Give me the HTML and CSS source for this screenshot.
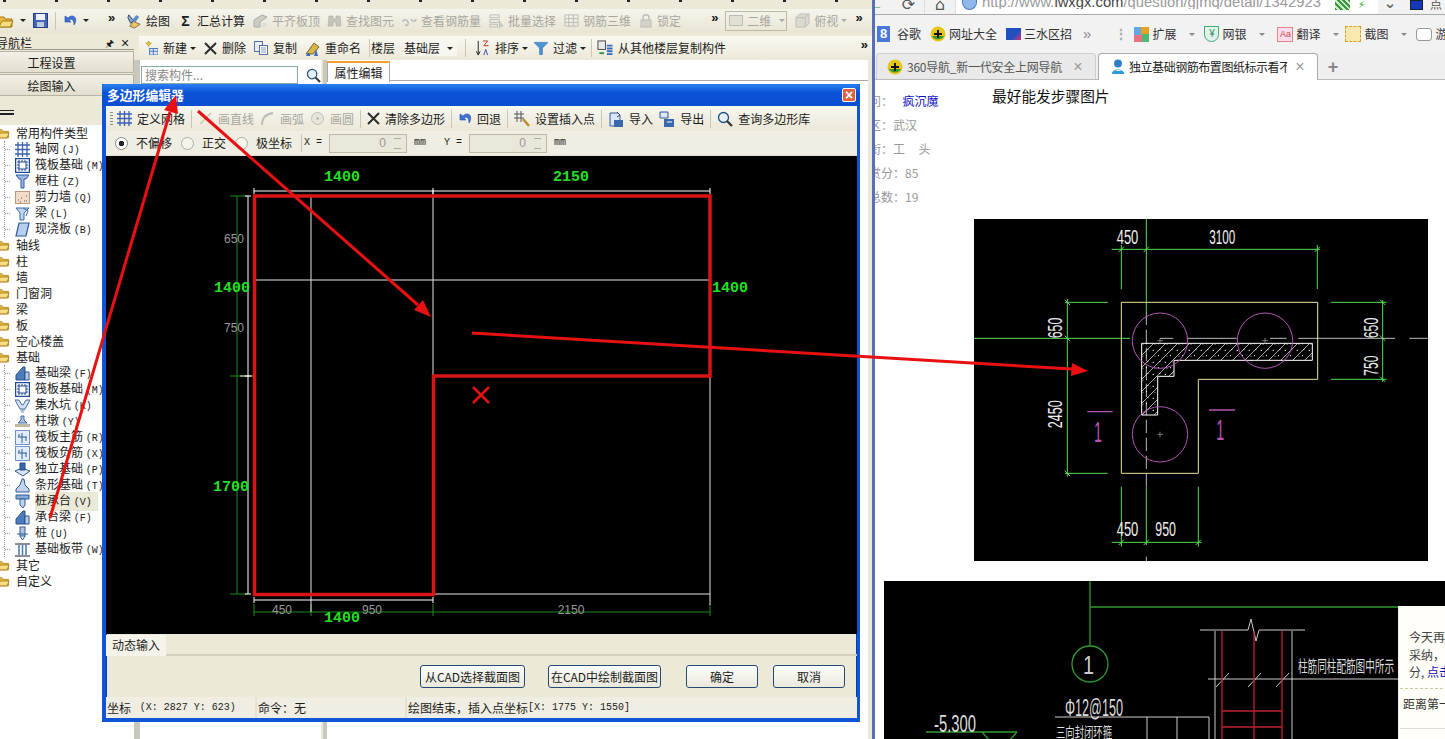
FILE: index.html
```html
<!DOCTYPE html>
<html lang="zh">
<head>
<meta charset="utf-8">
<title>多边形编辑器</title>
<link rel="stylesheet" href="styles.css">
</head>
<body>
<svg class="defs" width="0" height="0">
  <defs>
    <symbol id="i-folder" viewBox="0 0 16 14"><path d="M1 3h5l1 2h7v8H1z" fill="#e8b93c" stroke="#a57a18"/><path d="M1 13l3-6h11l-3 6z" fill="#f8dd80" stroke="#a57a18"/></symbol>
    <symbol id="i-save" viewBox="0 0 15 15"><rect x=".5" y=".5" width="14" height="14" fill="#4466b8" stroke="#223f88"/><rect x="3" y="1" width="9" height="6" fill="#eef"/><rect x="4" y="9" width="7" height="5" fill="#bcd"/></symbol>
    <symbol id="i-undo" viewBox="0 0 14 14"><path d="M2 2v6h6L6 6c3-2 5 0 5 5 3-4 2-9-2-9-2 0-3 1-4 2z" fill="#3f72d6" stroke="#224ea8" stroke-width=".6"/></symbol>
    <symbol id="i-draw" viewBox="0 0 17 17"><path d="M3 2l5 6-3 3-3-6z" fill="#8aa6d8" stroke="#345"/><path d="M8 9l7 3-6 4-5-2z" fill="#e8c860" stroke="#865"/><path d="M7 7l4-5 3 2-4 6z" fill="#5d8ad0"/></symbol>
    <symbol id="i-align" viewBox="0 0 15 15"><path d="M1 14V7l8-5 5 2-7 5v5z" fill="#cfcdc2" stroke="#aaa"/><path d="M9 14v-4h5v4z" fill="#ddd"/></symbol>
    <symbol id="i-bino" viewBox="0 0 15 15"><path d="M2 3h4v3h3V3h4l1 10H9V9H6v4H1z" fill="#c8c6bb" stroke="#aaa" stroke-width=".6"/></symbol>
    <symbol id="i-link" viewBox="0 0 15 15"><path d="M1 9c0-3 4-3 5 0s-1 4-3 3M14 6c0 3-4 3-5 0" fill="none" stroke="#bbb" stroke-width="1.6"/></symbol>
    <symbol id="i-batch" viewBox="0 0 16 16"><path d="M1 2h10v3H1zM1 7h10v3H1zM1 12h8v3H1z" fill="none" stroke="#bbb"/><path d="M11 9l4 5h-3l-1 2z" fill="#ccc" stroke="#aaa" stroke-width=".5"/></symbol>
    <symbol id="i-3d" viewBox="0 0 16 16"><path d="M1 2h14v12H1zM1 6h14M1 10h14M5 2v12M10 2v12" fill="none" stroke="#bbb"/></symbol>
    <symbol id="i-lock" viewBox="0 0 14 14"><path d="M4 6V3c0-3 6-3 6 0v3" fill="none" stroke="#bbb" stroke-width="1.4"/><rect x="2" y="6" width="10" height="7" fill="#d4d2c6" stroke="#bbb"/></symbol>
    <symbol id="i-cube" viewBox="0 0 16 16"><path d="M1 5l4-4h10v10l-4 4H1z" fill="#dddbce" stroke="#bbb"/><path d="M1 5h10v10M11 5l4-4" fill="none" stroke="#bbb"/></symbol>
    <symbol id="i-new" viewBox="0 0 15 15"><path d="M5 0l1 2 2 .5-2 1L5 6 4 3.500l-2-1 2-.5z" fill="#f0d020" stroke="#a08010" stroke-width=".6"/><rect x="6" y="8" width="9" height="7" fill="#dbe6f6" stroke="#4c74b8"/><path d="M6 11h9M10 8v7" stroke="#4c74b8"/></symbol>
    <symbol id="i-x" viewBox="0 0 13 13"><path d="M1 1l11 11M12 1L1 12" stroke="#2c2c2c" stroke-width="2"/></symbol>
    <symbol id="i-copy" viewBox="0 0 14 14"><rect x=".5" y=".5" width="8" height="10" fill="#e8edf7" stroke="#5570a8"/><rect x="5.500" y="4.500" width="8" height="9" fill="#fff" stroke="#5570a8"/><path d="M7 7h5M7 9h5M7 11h5" stroke="#5570a8" stroke-width=".7"/></symbol>
    <symbol id="i-rename" viewBox="0 0 15 15"><path d="M1 13L9 2l5 4-6 7z" fill="#d8b848" stroke="#7a6422"/><path d="M9 15l2-7 2 7zM1 15l2-3h2v3z" fill="#3f68c0"/></symbol>
    <symbol id="i-sort" viewBox="0 0 16 17"><path d="M4 1v14M2 12l2 4 2-4" stroke="#222" fill="none"/><path d="M9 1h5l-4 5h5" fill="none" stroke="#c03020"/><path d="M10 16l2-6 2 6" fill="none" stroke="#3050b0"/></symbol>
    <symbol id="i-filter" viewBox="0 0 15 14"><path d="M0 1h15L9 7v7H6V7z" fill="#4a94d8" stroke="#2a64a8" stroke-width=".6"/></symbol>
    <symbol id="i-floorcopy" viewBox="0 0 16 17"><rect x=".5" y="1" width="8" height="9" fill="#e9e9e9" stroke="#444"/><path d="M2 13h5v2H2z" fill="#2a9a40"/><path d="M10 6h6M10 9h6M10 12h6M10 15h6" stroke="#3a6cc0" stroke-width="2"/></symbol>
    <symbol id="i-grid" viewBox="0 0 15 15"><path d="M3 0v15M7.500 0v15M12 0v15M0 3h15M0 7.500h15M0 12h15" stroke="#3a62b0" stroke-width="1.300"/></symbol>
    <symbol id="i-raft" viewBox="0 0 15 15"><rect x=".5" y=".5" width="14" height="14" fill="none" stroke="#1e4a98" stroke-width="1.500"/><rect x="4" y="4" width="7" height="7" fill="none" stroke="#1e4a98"/><path d="M2 4h2M2 7h2M2 10h2M11 4h2M11 7h2M11 10h2M4 2v2M7 2v2M10 2v2M4 11v2M7 11v2M10 11v2" stroke="#1e4a98"/></symbol>
    <symbol id="i-col" viewBox="0 0 15 15"><path d="M1 1h13l-3 4H9v9H6V5H4z" fill="#9db8de" stroke="#2f5a9e"/></symbol>
    <symbol id="i-wall" viewBox="0 0 15 15"><rect x=".5" y="1.500" width="14" height="12" fill="#f2ddc8" stroke="#c09878"/><path d="M3 10h1M6 8h1M9 11h1M11 6h1M5 12h1M11 11h1" stroke="#556"/></symbol>
    <symbol id="i-beam" viewBox="0 0 15 15"><path d="M1 2h13L9 7v7H5V7z" fill="#c2d4ec" stroke="#3f6aa8"/><path d="M8 2l5 3-2 5" fill="none" stroke="#3f6aa8"/></symbol>
    <symbol id="i-slab" viewBox="0 0 15 15"><path d="M4 1h10l-3 13H1z" fill="#b6d0ef" stroke="#2f5a9e" stroke-width="1.200"/></symbol>
    <symbol id="i-fbeam" viewBox="0 0 15 15"><path d="M1 14V9l7-8h2v13z" fill="#4d7cbc" stroke="#2a4f88"/><path d="M10 14V6h4v8z" fill="#b8cfe9" stroke="#2a4f88"/></symbol>
    <symbol id="i-pit" viewBox="0 0 15 15"><path d="M0 2h4l3 5h1l3-5h4l-5 9H5z" fill="#d4e1f2" stroke="#4a6fa8"/><path d="M5 12h5M6 14h3" stroke="#68a"/></symbol>
    <symbol id="i-pier" viewBox="0 0 15 15"><path d="M6 2h3v4l3 3H3l3-3z" fill="#aec4e2" stroke="#3f6aa8"/><rect y="10" width="15" height="3" fill="#bdb9a4"/></symbol>
    <symbol id="i-rebar" viewBox="0 0 15 15"><rect x=".5" y=".5" width="14" height="14" fill="#e4eefa" stroke="#6f93c4"/><path d="M7 3v10M3 7h9M4 4v3M11 7v4" stroke="#2f5a9e"/></symbol>
    <symbol id="i-iso" viewBox="0 0 15 15"><path d="M0 9l7-3 8 3-7 5z" fill="#d7e3f3" stroke="#2f5a9e"/><path d="M5 1h5v7H5z" fill="#3a68ac" stroke="#204a88"/></symbol>
    <symbol id="i-strip" viewBox="0 0 15 15"><path d="M7 1h2l1 6 4 4v3H1v-3l4-4z" fill="#c2d4ec" stroke="#2f5a9e"/></symbol>
    <symbol id="i-cap" viewBox="0 0 15 15"><path d="M1 1h13v4H1z" fill="#8aaad6" stroke="#2f5a9e"/><path d="M5 5h5v6l-2 3-3-3z" fill="#c2d4ec" stroke="#2f5a9e"/></symbol>
    <symbol id="i-pile" viewBox="0 0 15 15"><rect x="5" y="1" width="5" height="9" fill="#aec4e2" stroke="#2f5a9e"/><path d="M2 8h11M5 10l2.500 4L10 10" fill="none" stroke="#2f5a9e"/></symbol>
    <symbol id="i-band" viewBox="0 0 15 15"><path d="M0 2h15M0 14h15" stroke="#667" stroke-width="1.500"/><path d="M4 3v10M7.500 3v10M11 3v10" stroke="#4a76b0" stroke-width="1.500"/></symbol>
    <symbol id="i-line" viewBox="0 0 15 15"><path d="M2 13L13 2" stroke="#c9c6b8" stroke-width="1.500"/></symbol>
    <symbol id="i-arc" viewBox="0 0 15 15"><path d="M2 14C2 7 6 3 13 2" fill="none" stroke="#bbb" stroke-width="1.800"/></symbol>
    <symbol id="i-circle" viewBox="0 0 15 15"><circle cx="7.500" cy="7.500" r="6" fill="#e8e6dc" stroke="#c2c0b4"/><circle cx="7.500" cy="7.500" r="1.200" fill="#aaa"/></symbol>
    <symbol id="i-insert" viewBox="0 0 16 16"><path d="M3 0v11M7 0v11M0 3h10M0 7h10" stroke="#555"/><path d="M9 8l6 7" stroke="#b89030" stroke-width="2.500"/></symbol>
    <symbol id="i-import" viewBox="0 0 16 16"><path d="M2 2h8l2 2v11H2z" fill="#dde6f5" stroke="#2f5a9e"/><rect x="6" y="9" width="9" height="7" fill="#3a68ac"/><path d="M9 1l3 3-3 2" fill="none" stroke="#345"/></symbol>
    <symbol id="i-export" viewBox="0 0 16 16"><path d="M1 1h8v6H1z" fill="#dde6f5" stroke="#2f5a9e"/><rect x="5" y="8" width="10" height="8" fill="#3a68ac"/><path d="M8 11h5" stroke="#fff"/></symbol>
    <symbol id="i-mag" viewBox="0 0 16 16"><circle cx="6.500" cy="6.500" r="5" fill="#e6f2fb" stroke="#1f4f80" stroke-width="1.300"/><path d="M10 10l5 5" stroke="#333" stroke-width="2.200"/></symbol>
    <symbol id="i-360" viewBox="0 0 16 16"><circle cx="8" cy="8" r="7.500" fill="#e6c619"/><path d="M2 10a7 7 0 0 0 12 0z" fill="#2f9a2c"/><path d="M8 4v8M4 8h8" stroke="#111" stroke-width="2"/></symbol>
    <symbol id="i-user" viewBox="0 0 16 18"><circle cx="8" cy="5" r="4.500" fill="#2f7fc8"/><path d="M1 17c0-7 14-7 14 0z" fill="#2f9ad8"/><path d="M6 13h5" stroke="#fff"/></symbol>
  </defs>
</svg>

<main class="desktop">
  <section class="app">
    <div class="menu-strip"></div>
    <div class="toolbar-top">
      <div class="quick">
        <svg class="ic16"><use href="#i-folder"/></svg><i class="drop"></i>
        <svg class="ic15 save"><use href="#i-save"/></svg><b class="sep"></b>
        <svg class="ic14"><use href="#i-undo"/></svg><i class="drop"></i>
        <span class="more">»</span>
      </div>
      <div class="tb tb-main">
        <span class="tool"><svg class="ic16"><use href="#i-draw"/></svg>绘图</span>
        <span class="tool"><span class="sigma">Σ</span>汇总计算</span>
        <span class="tool off"><svg class="ic15"><use href="#i-align"/></svg>平齐板顶</span>
        <span class="tool off tight"><svg class="ic15"><use href="#i-bino"/></svg>查找图元</span>
        <span class="tool off"><svg class="ic15"><use href="#i-link"/></svg>查看钢筋量</span>
        <span class="tool off"><svg class="ic15"><use href="#i-batch"/></svg>批量选择</span>
        <span class="tool off"><svg class="ic15"><use href="#i-3d"/></svg>钢筋三维</span>
        <span class="tool off"><svg class="ic14"><use href="#i-lock"/></svg>锁定</span>
        <span class="more more-a">»</span>
        <span class="combo off"><b class="combo-ic"></b>二维<i class="drop"></i></span>
        <span class="tool off"><svg class="ic15"><use href="#i-cube"/></svg>俯视<i class="drop"></i></span>
        <span class="more">»</span>
      </div>
    </div>
    <div class="work">
      <aside class="nav">
        <div class="nav-head"><span class="nav-title">导航栏</span><span class="pin">🖈</span><span class="close">×</span></div>
        <div class="nav-btn">工程设置</div>
        <div class="nav-btn">绘图输入</div>
        <div class="nav-tools"><b class="dash"></b></div>
        <div class="tree">
          <div class="node"><svg class="ic-f"><use href="#i-folder"/></svg>常用构件类型</div>
          <div class="kids">
            <div class="kid"><svg class="ic15"><use href="#i-grid"/></svg><span>轴网 <em>(J)</em></span></div>
            <div class="kid"><svg class="ic15"><use href="#i-raft"/></svg><span>筏板基础 <em>(M)</em></span></div>
            <div class="kid"><svg class="ic15"><use href="#i-col"/></svg><span>框柱 <em>(Z)</em></span></div>
            <div class="kid"><svg class="ic15"><use href="#i-wall"/></svg><span>剪力墙 <em>(Q)</em></span></div>
            <div class="kid"><svg class="ic15"><use href="#i-beam"/></svg><span>梁 <em>(L)</em></span></div>
            <div class="kid"><svg class="ic15"><use href="#i-slab"/></svg><span>现浇板 <em>(B)</em></span></div>
          </div>
          <div class="node"><svg class="ic-f"><use href="#i-folder"/></svg>轴线</div>
          <div class="node"><svg class="ic-f"><use href="#i-folder"/></svg>柱</div>
          <div class="node"><svg class="ic-f"><use href="#i-folder"/></svg>墙</div>
          <div class="node"><svg class="ic-f"><use href="#i-folder"/></svg>门窗洞</div>
          <div class="node"><svg class="ic-f"><use href="#i-folder"/></svg>梁</div>
          <div class="node"><svg class="ic-f"><use href="#i-folder"/></svg>板</div>
          <div class="node"><svg class="ic-f"><use href="#i-folder"/></svg>空心楼盖</div>
          <div class="node"><svg class="ic-f"><use href="#i-folder"/></svg>基础</div>
          <div class="kids">
            <div class="kid"><svg class="ic15"><use href="#i-fbeam"/></svg><span>基础梁 <em>(F)</em></span></div>
            <div class="kid"><svg class="ic15"><use href="#i-raft"/></svg><span>筏板基础 <em>(M)</em></span></div>
            <div class="kid"><svg class="ic15"><use href="#i-pit"/></svg><span>集水坑 <em>(K)</em></span></div>
            <div class="kid"><svg class="ic15"><use href="#i-pier"/></svg><span>柱墩 <em>(Y)</em></span></div>
            <div class="kid"><svg class="ic15"><use href="#i-rebar"/></svg><span>筏板主筋 <em>(R)</em></span></div>
            <div class="kid"><svg class="ic15"><use href="#i-rebar"/></svg><span>筏板负筋 <em>(X)</em></span></div>
            <div class="kid"><svg class="ic15"><use href="#i-iso"/></svg><span>独立基础 <em>(P)</em></span></div>
            <div class="kid"><svg class="ic15"><use href="#i-strip"/></svg><span>条形基础 <em>(T)</em></span></div>
            <div class="kid"><svg class="ic15"><use href="#i-cap"/></svg><span class="picked">桩承台 <em>(V)</em></span></div>
            <div class="kid"><svg class="ic15"><use href="#i-fbeam"/></svg><span>承台梁 <em>(F)</em></span></div>
            <div class="kid"><svg class="ic15"><use href="#i-pile"/></svg><span>桩 <em>(U)</em></span></div>
            <div class="kid"><svg class="ic15"><use href="#i-band"/></svg><span>基础板带 <em>(W)</em></span></div>
          </div>
          <div class="node"><svg class="ic-f"><use href="#i-folder"/></svg>其它</div>
          <div class="node"><svg class="ic-f"><use href="#i-folder"/></svg>自定义</div>
        </div>
      </aside>
      <div class="content">
        <div class="tb tb-second">
          <span class="tool"><svg class="ic14"><use href="#i-new"/></svg>新建<i class="drop"></i></span>
          <span class="tool"><svg class="ic13"><use href="#i-x"/></svg>删除</span>
          <span class="tool"><svg class="ic14"><use href="#i-copy"/></svg>复制</span>
          <span class="tool"><svg class="ic15"><use href="#i-rename"/></svg>重命名</span>
          <b class="sep"></b>
          <span class="floor-label">楼层</span>
          <span class="floor">基础层<i class="drop"></i></span>
          <b class="sep"></b>
          <span class="tool"><svg class="ic16"><use href="#i-sort"/></svg>排序<i class="drop"></i></span>
          <span class="tool tool-filter"><svg class="ic14"><use href="#i-filter"/></svg>过滤<i class="drop"></i></span>
          <b class="sep sep-last"></b>
          <span class="tool tool-last"><svg class="ic16"><use href="#i-floorcopy"/></svg>从其他楼层复制构件</span>
          <span class="more more-end">»</span>
        </div>
        <div class="panes">
          <div class="list-pane">
            <div class="search"><span class="search-box">搜索构件...</span><svg class="ic15"><use href="#i-mag"/></svg></div>
          </div>
          <div class="prop-pane">
            <div class="tabs"><span class="prop-tab">属性编辑</span></div>
          </div>
        </div>
      </div>
    </div>
  </section>

  <section class="browser">
    <div class="b-top">
      <span class="b-back">←</span>
      <span class="b-btn">⟳</span>
      <span class="b-btn">⌂</span>
      <div class="urlbar">
        <b class="globe"></b>
        <span class="url">http://www.<strong>lwxgx.com</strong>/question/gjmq/detail/1342923</span>
        <span class="qr"></span><span class="bolt">⚡</span>
      </div>
      <span class="chev">⌄</span>
      <b class="avatar"></b><span class="b-tail">点</span>
    </div>
    <div class="b-marks">
      <span class="mark"><b class="g8">8</b>谷歌</span>
      <span class="mark"><svg class="ic16"><use href="#i-360"/></svg>网址大全</span>
      <span class="mark"><b class="sanshui"></b>三水区招</span>
      <span class="mark-more">»</span>
      <span class="grip">⋮</span>
      <span class="mark"><b class="ext"></b>扩展<i class="drop"></i></span>
      <span class="mark"><b class="bank">¥</b>网银<i class="drop"></i></span>
      <span class="mark mark-aa"><b class="aa">Aa</b>翻译<i class="drop"></i></span>
      <span class="mark mark-cut"><b class="cut"></b>截图<i class="drop"></i></span>
      <span class="mark"><b class="game"></b>游</span>
    </div>
    <div class="b-tabs">
      <div class="b-tab"><svg class="ic16"><use href="#i-360"/></svg><span class="b-tab-title">360导航_新一代安全上网导航</span><span class="b-x">×</span></div>
      <div class="b-tab active"><svg class="ic16"><use href="#i-user"/></svg><span class="b-tab-title">独立基础钢筋布置图纸标示看不</span><span class="b-x">×</span></div>
      <span class="b-plus">+</span>
    </div>
    <div class="page">
      <div class="thread">
        <div class="side">
          <p>问：&nbsp; <a>疯沉魔</a></p>
          <p>区：武汉</p>
          <p>衔：工 &nbsp; &nbsp; 头</p>
          <p>赏分：85</p>
          <p>总数：19</p>
        </div>
        <p class="question">最好能发步骤图片</p>
      </div>
      <svg class="cad-one" viewBox="12 12 1362 1026" width="454" height="342">
        <defs>
          <pattern id="hatch" width="36" height="36" patternUnits="userSpaceOnUse">
            <path d="M0 36L36 0M-9 9L9 -9M27 45L45 27" stroke="#fff" stroke-width="2"/>
            <path d="M8 10h4M24 26h3M14 28h2M28 8h3" stroke="#fff" stroke-width="3"/>
          </pattern>
        </defs>
        <rect x="12" y="12" width="1362" height="1026" fill="#000"/>
        <g fill="none" stroke="#55dd55" stroke-width="3">
          <path d="M529 12V290M529 815V990M454 90V222M1042 90V222M425 103H1050M292 252V785M285 262H413M285 775H413M1238 255V500M1083 262H1250M1083 493H1250M425 982H695M454 815V995M685 815V995M12 370H480"/>
          <path d="M446 111l16-16M521 111l16-16M1034 111l16-16M284 254l16 16M284 767l16 16M1230 254l16 16M1230 485l16 16M284 362l16 16M1230 362l16 16M446 990l16-16M521 990l16-16M677 990l16-16"/>
        </g>
        <path d="M529 290V815M529 1025v13" fill="none" stroke="#bbb" stroke-width="3" stroke-dasharray="40 14"/>
        <path d="M570 370H610M650 370H800M900 370H950M985 370H1275M1318 370H1373" fill="none" stroke="#bbb" stroke-width="3"/>
        <path d="M454 262H1043V493H685V775H454Z" fill="none" stroke="#e8e29a" stroke-width="3"/>
        <path d="M515 385H1027V436H612V484H563V600H515Z" fill="url(#hatch)" stroke="#fff" stroke-width="3"/>
        <g fill="none" stroke="#b455b4" stroke-width="3">
          <circle cx="570" cy="377" r="83"/><circle cx="885" cy="377" r="83"/><circle cx="570" cy="658" r="83"/>
          <path d="M352 590H428M717 585H795" stroke-width="4"/>
        </g>
        <path d="M562 658h17M570 650v17M562 377h17M570 369v17M877 377h17M885 369v17" stroke="#aaa" stroke-width="2"/>
        <g class="cad-text">
          <text x="440" y="86" textLength="65" lengthAdjust="spacingAndGlyphs">450</text>
          <text x="718" y="86" textLength="78" lengthAdjust="spacingAndGlyphs">3100</text>
          <text x="440" y="964" textLength="65" lengthAdjust="spacingAndGlyphs">450</text>
          <text x="556" y="964" textLength="62" lengthAdjust="spacingAndGlyphs">950</text>
          <text transform="translate(277 370) rotate(-90)" textLength="62" lengthAdjust="spacingAndGlyphs">650</text>
          <text transform="translate(277 640) rotate(-90)" textLength="84" lengthAdjust="spacingAndGlyphs">2450</text>
          <text transform="translate(1223 370) rotate(-90)" textLength="62" lengthAdjust="spacingAndGlyphs">650</text>
          <text transform="translate(1223 482) rotate(-90)" textLength="60" lengthAdjust="spacingAndGlyphs">750</text>
        </g>
        <g class="cad-mark">
          <text x="372" y="680" textLength="24" lengthAdjust="spacingAndGlyphs">1</text>
          <text x="739" y="675" textLength="24" lengthAdjust="spacingAndGlyphs">1</text>
        </g>
      </svg>
      <svg class="cad-two" viewBox="884 581 561 158" width="561" height="158">
        <rect x="884" y="581" width="561" height="158" fill="#000"/>
        <g fill="none" stroke="#2f9a2f" stroke-width="1.300">
          <path d="M1090 581V646M1090 607H1398M926 732H1017M982 732l8 9M1017 732l-8 9"/>
          <circle cx="1090" cy="664" r="18"/>
        </g>
        <g fill="none" stroke="#ccc">
          <path d="M1200 630H1248L1251 619L1256 641L1259 630H1305M1215 631V739M1292 631V739M1208 679H1398M1055 717H1209M1147 717V739M1177 717V739M1209 717V739"/>
          <path d="M1216 687l13-14M1248 687l13-14M1276 687l13-14"/>
        </g>
        <path d="M1222 631V739M1254 631V739M1282 631V739M1222 711H1282M1222 727H1282" fill="none" stroke="#c02030" stroke-width="1.300"/>
        <g class="cad-small">
          <text x="1083" y="674" class="big" textLength="11" lengthAdjust="spacingAndGlyphs">1</text>
          <text x="1298" y="672" class="cjk" textLength="96" lengthAdjust="spacingAndGlyphs">柱筋同柱配筋图中所示</text>
          <text x="1065" y="716" class="mid" textLength="58" lengthAdjust="spacingAndGlyphs">Φ12@150</text>
          <text x="934" y="732" class="mid" textLength="42" lengthAdjust="spacingAndGlyphs">-5.300</text>
          <text x="1056" y="737" class="cjk cjk-s" textLength="56" lengthAdjust="spacingAndGlyphs">三向封闭环箍</text>
        </g>
      </svg>
      <aside class="popup">
        <p>今天再有</p>
        <p>采纳，当</p>
        <p>分, <a>点击</a></p>
        <div class="popup-rank">距离第一</div>
        <div class="popup-foot"><b></b></div>
      </aside>
    </div>
  </section>

  <section class="dialog">
    <header class="d-title"><span>多边形编辑器</span><span class="d-close">×</span></header>
    <div class="tb d-tools">
      <b class="grip-v"></b>
      <span class="tool"><svg class="ic15"><use href="#i-grid"/></svg>定义网格</span>
      <b class="sep"></b>
      <span class="tool off"><svg class="ic15"><use href="#i-line"/></svg>画直线</span>
      <span class="tool off"><svg class="ic15"><use href="#i-arc"/></svg>画弧</span>
      <span class="tool off"><svg class="ic15"><use href="#i-circle"/></svg>画圆</span>
      <b class="sep"></b>
      <span class="tool"><svg class="ic13"><use href="#i-x"/></svg>清除多边形</span>
      <b class="sep"></b>
      <span class="tool"><svg class="ic14"><use href="#i-undo"/></svg>回退</span>
      <b class="sep"></b>
      <span class="tool"><svg class="ic16"><use href="#i-insert"/></svg>设置插入点</span>
      <b class="sep"></b>
      <span class="tool"><svg class="ic16"><use href="#i-import"/></svg>导入</span>
      <span class="tool"><svg class="ic16"><use href="#i-export"/></svg>导出</span>
      <b class="sep"></b>
      <span class="tool"><svg class="ic16"><use href="#i-mag"/></svg>查询多边形库</span>
    </div>
    <div class="d-coords">
      <div class="radios">
        <span class="radio on">不偏移</span>
        <span class="radio">正交</span>
        <span class="radio">极坐标</span>
      </div>
      <b class="sep"></b>
      <span class="mono lab">X =</span><span class="spin">0<i class="spin-btn"></i></span><span class="mono unit">mm</span>
      <span class="mono lab lab-y">Y =</span><span class="spin">0<i class="spin-btn"></i></span><span class="mono unit">mm</span>
    </div>
    <svg class="canvas" viewBox="106 156 751 478" width="751" height="478">
      <rect x="106" y="156" width="751" height="478" fill="#000"/>
      <g fill="none" stroke="#1f8a1f">
        <path d="M237 196V594M230 196H248M230 376H248M230 594H248M254 612H710M254 604V616M311 604V616M433 604V616M710 604V616"/>
      </g>
      <g fill="none" stroke="#e4e4e4">
        <path d="M311 196V612M433 190V376M254 280H710M240 376H254M433 594H710M710 376V605"/>
      </g>
      <g fill="none" stroke="#fff">
        <path d="M254 191H710M254 188V194M433 188V194M710 188V194M248 196V594M245 196H251M245 376H251M245 594H251M254 600H433M254 597V603M433 597V603"/>
      </g>
      <path d="M254.500 196H710V376H433.500V594.500H254.500Z" fill="none" stroke="#d81414" stroke-width="3.500"/>
      <g class="dim-green">
        <text x="342" y="181">1400</text>
        <text x="571" y="181">2150</text>
        <text x="232" y="292">1400</text>
        <text x="730" y="292">1400</text>
        <text x="231" y="491">1700</text>
        <text x="342" y="622">1400</text>
      </g>
      <g class="dim-gray">
        <text x="234" y="243">650</text>
        <text x="234" y="332">750</text>
        <text x="282" y="614">450</text>
        <text x="372" y="614">950</text>
        <text x="571" y="614">2150</text>
      </g>
    </svg>
    <div class="d-dyn"><span class="dyn-tab">动态输入</span></div>
    <div class="d-actions">
      <button class="btn btn-a">从CAD选择截面图</button>
      <button class="btn btn-b">在CAD中绘制截面图</button>
      <button class="btn btn-c">确定</button>
      <button class="btn btn-c btn-last">取消</button>
    </div>
    <footer class="d-status">
      <span class="cell c1">坐标 <em> (X: 2827 Y: 623)</em></span>
      <span class="cell c2">命令：无</span>
      <span class="cell c3">绘图结束，插入点坐标<em>[X: 1775 Y: 1550]</em></span>
    </footer>
  </section>

  <svg class="annot" viewBox="0 0 1445 739" width="1445" height="739">
    <g fill="none" stroke="#e81010" stroke-width="3">
      <path d="M50 518L170 112"/>
      <path d="M198 111L418 305"/>
      <path d="M472 333L1072 369"/>
      <path d="M473 387L489 403M489 387L473 403" stroke-width="2.500"/>
    </g>
    <g fill="#e81010">
      <path d="M176 95L178 114L164 110Z"/>
      <path d="M431 317L414 310L423 300Z"/>
      <path d="M1088 371L1071 376L1072 363Z"/>
    </g>
  </svg>
</main>
</body>
</html>
```

FILE: styles.css
```css
* { box-sizing: border-box; }
html, body { margin: 0; padding: 0; background: #fff; }
body { font: 12px/16px "Noto Sans CJK SC", "Liberation Sans", sans-serif; color: #1c1c1c; overflow: hidden; }
p { margin: 0; }
em { font: 10px/16px "Liberation Mono", monospace; }
svg { display: block; flex: none; }
.defs { position: absolute; }
.ic13 { width: 13px; height: 13px; }
.ic14 { width: 14px; height: 14px; }
.ic15 { width: 15px; height: 15px; }
.ic16 { width: 16px; height: 16px; }

.desktop { position: relative; display: flex; width: 1445px; height: 739px; overflow: hidden; }

/* application */
.app { width: 872px; height: 739px; background: #ece9d8; display: flex; flex-direction: column; flex: none; overflow: hidden; }
.menu-strip { height: 9px; background-color: #ece9d8; background-image: repeating-linear-gradient(90deg, transparent 0 3px, #222 3px 6px, transparent 6px 52px); background-size: 100% 2px; background-repeat: no-repeat; flex: none; }
.toolbar-top { display: flex; height: 24px; flex: none; align-items: center; padding-bottom: 1px; background: linear-gradient(#f6f5ec, #e8e5d3); }
.quick { width: 124px; display: flex; align-items: center; margin-left: -2px; flex: none; }
.quick .drop { margin: 0 7px 0 6px; }
.quick .sep { margin: 0 7px; }
.quick .more { margin-left: 12px; }
.tb { display: flex; align-items: center; gap: 8px; white-space: nowrap; }
.tool { display: inline-flex; align-items: center; gap: 4px; }
.tool .drop { margin-left: -1px; }
.off { color: #a8a79e; }
.tight { margin-left: -1px; }
.drop { display: inline-block; width: 0; height: 0; border: 3px solid transparent; border-top: 3px solid #222; border-bottom: 0; flex: none; }
.off .drop { border-top-color: #aaa; }
.sep { display: block; width: 1px; height: 18px; background: #c9c6b4; flex: none; }
.more { font: bold 13px/12px "Liberation Sans", sans-serif; margin-top: -6px; color: #111; }
.more-a { margin-left: 22px; }
.tb-main { padding-left: 4px; }
.sigma { width: 15px; font: bold 14px/16px "Liberation Sans", sans-serif; text-align: center; }
.combo { width: 62px; height: 20px; border: 1px solid #bdbaa8; display: flex; align-items: center; gap: 4px; padding-left: 3px; margin-left: -1px; }
.combo-ic { width: 14px; height: 11px; border: 1px solid #bbb; background: #e2e0d2; }
.combo .drop { margin-left: 4px; }

.work { display: flex; flex: 1; min-height: 0; }
.nav { width: 134px; flex: none; padding-top: 3px; overflow: hidden; }
.nav-head { height: 14px; display: flex; align-items: center; border-bottom: 1px solid #9a9888; position: relative; }
.nav-title { margin-left: -4px; flex: 1; }
.pin { width: 14px; font-size: 10px; text-align: center; }
.close { width: 18px; font: 14px/14px "Liberation Sans", sans-serif; text-align: center; }
.nav-btn { height: 22px; margin-top: 1px; text-align: center; line-height: 22px; padding-right: 30px; background: linear-gradient(#f3f1e6, #e2dfce); border: 1px solid #b5b3a1; border-left: 0; }
.nav-btn:first-of-type { margin-top: 2px; }
.nav-tools { height: 29px; background: #ece9d8; padding: 14px 0 0 0; }
.dash { display: block; width: 14px; height: 5px; border-top: 1px solid #222; border-bottom: 2px solid #222; }
.tree { background: #fff; height: 620px; }
.node { display: flex; align-items: center; height: 16px; gap: 6px; margin-left: -3px; white-space: nowrap; }
.ic-f { width: 13px; height: 12px; flex: none; }
.kids { margin-left: 4px; border-left: 1px dotted #999; }
.kid { display: flex; align-items: center; gap: 5px; height: 16px; white-space: nowrap; }
.kid::before { content: ""; width: 5px; border-top: 1px dotted #999; flex: none; }
.picked { background: #ebe9d8; padding-right: 6px; }

.content { flex: 1; min-width: 0; padding-top: 3px; display: flex; flex-direction: column; }
.tb-second { height: 24px; flex: none; padding-left: 5px; background: linear-gradient(#faf9f2, #ebe8d8); gap: 8px; margin-left: 5px; }
.tb-second .tool { gap: 5px; }
.tb-second .tool .drop { margin-left: -2px; }
.tb-second .sep + .floor-label { margin-left: -7px; }
.floor { width: 54px; display: flex; align-items: center; gap: 7px; background: #f8f7ef; padding-left: 1px; }
.tool-filter { margin-left: -2px; }
.sep-last { margin-left: -3px; }
.tool-last { margin-left: -3px; }
.more-end { margin-left: auto; margin-right: 4px; }
.panes { flex: 1; display: flex; min-height: 0; }
.list-pane { width: 189px; flex: none; background: #fff; border-left: 6px solid #c9c8bc; border-right: 2px solid #ece9d8; padding: 6px 0 0 1px; }
.search { display: flex; gap: 8px; align-items: center; }
.search-box { width: 157px; height: 18px; border: 1px solid #8aa; padding-left: 3px; color: #888; line-height: 16px; }
.prop-pane { flex: 1; background: #fff; border-left: 4px solid #c9c8bc; margin-right: 4px; }
.tabs { height: 21px; border-bottom: 1px solid #aaa; background: #fff; }
.prop-tab { display: inline-block; height: 21px; width: 63px; margin-top: 1px; text-align: center; line-height: 20px; border: 1px solid #aaa; border-top: 2px solid #f0a030; border-bottom: 0; background: #fff; }

/* browser */
.browser { width: 573px; height: 739px; flex: none; border-left: 3px solid #5a6ec0; position: relative; background: #fff; overflow: hidden; }
.b-top { height: 15px; display: flex; align-items: flex-start; background: #f2f2f2; border-bottom: 1px solid #aaa; position: relative; overflow: hidden; }
.b-back { width: 24px; color: #2a9a2a; font: bold 14px/10px "Liberation Sans", sans-serif; margin-left: -6px; flex: none; }
.b-btn { width: 32px; flex: none; font: 16px/10px "DejaVu Sans", sans-serif; text-align: center; color: #555; border-right: 1px solid #ddd; height: 15px; }
.b-btn + .b-btn { width: 31px; }
.urlbar { width: 422px; height: 14px; flex: none; background: #fff; display: flex; align-items: flex-start; padding-left: 6px; gap: 5px; }
.globe { width: 15px; height: 10px; border-radius: 0 0 8px 8px; background: #8fb8e8; border: 1px solid #4a80c8; border-top: 0; flex: none; }
.url { font: 14.800px/11px "Liberation Sans", sans-serif; color: #9a9a9a; width: 340px; flex: none; white-space: nowrap; overflow: hidden; height: 14px; margin-top: -5px; padding-top: 2px; }
.url strong { font-weight: normal; color: #444; }
.qr { width: 15px; height: 10px; flex: none; margin-left: 8px; background: repeating-linear-gradient(45deg, #3a9a3a 0 2px, #cfe8cf 2px 4px); }
.bolt { font: 10px/10px "DejaVu Sans", sans-serif; color: #2ab02a; margin-left: 3px; }
.chev { width: 24px; flex: none; text-align: center; font: bold 15px/6px "DejaVu Sans", sans-serif; color: #666; }
.avatar { width: 13px; height: 10px; margin-left: 8px; background: #1838b8; border: 1px solid #123; flex: none; }
.b-tail { margin-left: 7px; line-height: 8px; color: #555; }
.b-marks { height: 38px; background: #f2f2f2; display: flex; align-items: center; gap: 9px; padding-left: 2px; white-space: nowrap; color: #333; }
.mark { display: inline-flex; align-items: center; gap: 3px; }
.mark .drop { margin-left: 10px; border-top-color: #888; }
.g8 { width: 13px; height: 16px; background: #4a78d8; color: #fff; font: bold 13px/16px "Liberation Sans", sans-serif; text-align: center; margin-right: 4px; }
.sanshui { width: 15px; height: 12px; background: linear-gradient(135deg, #2050c0 60%, #e03070); }
.mark-more { margin: 0 14px 0 2px; color: #888; font: 15px/16px "Liberation Sans", sans-serif; }
.grip { color: #aaa; margin-right: -3px; font: bold 14px/16px "Liberation Sans", sans-serif; }
.mark-aa { margin-left: 3px; }
.mark-cut { margin-left: -3px; }
.ext { width: 15px; height: 15px; background: conic-gradient(#e8a020 25%, #50b870 0 50%, #e87080 0 75%, #60a8e8 0); }
.bank { width: 15px; height: 16px; border: 1px solid #40a880; border-radius: 0 0 8px 8px; background: #e0f4ea; color: #309060; font: 10px/13px "Liberation Sans", sans-serif; text-align: center; }
.aa { width: 16px; height: 15px; border: 1px solid #d88; background: #fde; color: #c44; font: 9px/13px "Liberation Sans", sans-serif; text-align: center; }
.cut { width: 16px; height: 16px; border: 1px dashed #d8a020; background: #f8e8b0; }
.game { width: 16px; height: 13px; border: 1px solid #999; border-radius: 3px; background: #fff; }
.b-tabs { height: 27px; background: #efefef; border-bottom: 1px solid #bbb; display: flex; align-items: flex-end; padding-left: 1px; gap: 2px; position: relative; }
.b-tab { width: 220px; height: 26px; border: 1px solid #cfcfcf; border-bottom: 0; border-radius: 4px 4px 0 0; background: #e9e9e9; display: flex; align-items: center; padding: 0 10px; gap: 4px; color: #555; }
.b-tab.active { background: #fff; border-color: #aaa; color: #222; height: 27px; margin-bottom: -1px; }
.b-tab.active .ic16 { width: 14px; height: 16px; margin-left: 2px; }
.b-tab-title { flex: 1; overflow: hidden; white-space: nowrap; letter-spacing: -.25px; }
.b-tab.active .b-tab-title { letter-spacing: -.45px; }
.b-x { width: 14px; margin-left: 2px; color: #999; font: 16px/16px "Liberation Sans", sans-serif; text-align: center; }
.b-plus { width: 26px; text-align: center; color: #888; font: bold 18px/24px "Liberation Sans", sans-serif; }
.page { position: relative; height: 660px; overflow: hidden; }
.thread { display: flex; height: 139px; }
.side { width: 114px; flex: none; overflow: hidden; padding-top: 9px; color: #999; }
.side p { height: 24px; line-height: 24px; margin-left: -6px; white-space: nowrap; }
.side a { color: #1010c0; margin-left: 4px; }
.question { font-size: 14.700px; line-height: 18px; padding-top: 7px; color: #111; margin-left: 3px; }
.cad-one { margin-left: 99px; }
.cad-two { margin-left: 9px; margin-top: 20px; }
.cad-text text { font: 58px "Liberation Sans", sans-serif; fill: #eee; }
.cad-mark text { font: 88px "Liberation Sans", sans-serif; fill: #b455b4; }
.cad-small text { fill: #ddd; }
.cad-small .big { font: 26px "Liberation Sans", sans-serif; fill: #ccc; }
.cad-small .cjk { font: 16px "Noto Sans CJK SC", sans-serif; }
.cad-small .cjk-s { font-size: 14px; }
.cad-small .mid { font: 23px "Liberation Sans", sans-serif; }
.popup { position: absolute; left: 523px; top: 526px; width: 60px; height: 140px; background: #fffef8; padding: 22px 0 0 10px; white-space: nowrap; color: #444; line-height: 17.500px; border-left: 1px solid #eee; overflow: hidden; }
.popup a { color: #1010c0; }
.popup-rank { margin: 7px 0 0 -9px; padding: 6px 0 0 3px; border-top: 1px dashed #c9c9a0; height: 40px; color: #333; font-size: 12px; }
.popup-foot { margin: 0 0 0 -9px; border-top: 1px solid #ddd; padding: 10px 0 0 22px; }
.popup-foot b { display: block; width: 16px; height: 6px; background: #5a80c8; }

/* dialog */
.dialog { position: absolute; left: 102px; top: 84px; width: 758px; height: 638px; background: #ece9d8; border: solid #0f55d8; border-width: 0 3px 4px 4px; display: flex; flex-direction: column; box-shadow: 0 0 0 1px #0a3cb0 inset; }
.d-title { height: 22px; margin: 0 -3px 0 -4px; padding: 0 4px 0 5px; flex: none; display: flex; justify-content: space-between; align-items: center; color: #fff; font-weight: bold; font-size: 12.800px; background: linear-gradient(#2a80f0, #0a52d8 40%, #0a4fd0); border-radius: 3px 3px 0 0; }
.d-close { width: 14px; height: 14px; border: 1px solid #fff; border-radius: 2px; background: #e06040; font: bold 14px/12px "Liberation Sans", sans-serif; text-align: center; }
.d-tools { height: 25px; flex: none; padding-left: 4px; background: linear-gradient(#f8f7f0, #ebe8d8); gap: 6px; }
.d-tools .tool { gap: 5px; }
.grip-v { width: 3px; height: 14px; background: repeating-linear-gradient(#888 0 1px, transparent 1px 3px); margin-right: -2px; }
.d-coords { height: 25px; flex: none; display: flex; align-items: center; background: #f0eee2; border-bottom: 1px solid #e4e1d0; }
.radios { display: flex; align-items: center; width: 195px; flex: none; padding-left: 9px; gap: 9px; }
.radio { display: inline-flex; align-items: center; gap: 8px; }
.radio::before { content: ""; width: 11px; height: 11px; border-radius: 50%; border: 1px solid #b0ae9e; background: #f6f5ec; flex: none; }
.radio.on::before { background: radial-gradient(#222 0 2.500px, #fff 3px); border-color: #888; }
.d-coords .sep { margin-right: 2px; }
.mono { font: 10px/16px "Liberation Mono", monospace; }
.lab { width: 25px; }
.lab-y { margin-left: 15px; }
.spin { position: relative; width: 78px; height: 19px; border: 1px solid #bdbaa8; background: #e9e7da; text-align: right; padding-right: 20px; color: #999; font: 12px/17px "Liberation Sans", sans-serif; }
.spin-btn { position: absolute; right: 5px; top: 3px; width: 7px; height: 11px; border-top: 1px solid #aaa; border-bottom: 1px solid #aaa; }
.unit { margin-left: 7px; width: 15px; }
.canvas { flex: none; }
.dim-green text { font: bold 15px "Liberation Mono", monospace; fill: #22e022; text-anchor: middle; }
.dim-gray text { font: 12px "Liberation Sans", sans-serif; fill: #999; text-anchor: middle; }
.d-dyn { height: 22px; flex: none; padding-top: 1px; border-bottom: 2px solid #d4d1c0; }
.dyn-tab { display: inline-block; width: 60px; height: 21px; background: #f6f4ea; padding-left: 6px; line-height: 20px; }
.d-actions { height: 41px; flex: none; display: flex; align-items: center; justify-content: flex-end; gap: 23px; padding-right: 12px; }
.btn { height: 23px; padding: 0; font: 12px/20px "Noto Sans CJK SC", sans-serif; color: #1c1c1c; background: linear-gradient(#fdfdfb, #ebe9dc); border: 1px solid #264a78; border-radius: 3px; }
.btn-a { width: 105px; }
.btn-b { width: 113px; margin-right: 2px; }
.btn-c { width: 72px; }
.btn-last { margin-left: -8px; }
.d-status { height: 21px; flex: none; display: flex; gap: 2px; background: #e4e1d0; }
.cell { background: #f0eee2; display: flex; align-items: center; white-space: pre; }
.c1 { width: 149px; padding-left: 1px; }
.c2 { width: 148px; padding-left: 1px; }
.c3 { flex: 1; padding-left: 1px; }
.cell em { font-size: 10px; }

.annot { position: absolute; left: 0; top: 0; pointer-events: none; }
```
